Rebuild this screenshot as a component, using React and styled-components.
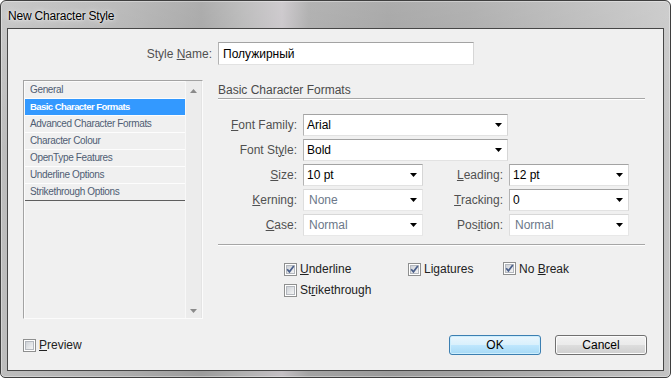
import React from 'react';
import styled, { createGlobalStyle } from 'styled-components';

const Global = createGlobalStyle`
  html, body { margin: 0; padding: 0; background: #fff; }
  body {
    width: 671px; height: 378px; overflow: hidden;
    font-family: "Liberation Sans", Arial, sans-serif;
  }
  * { box-sizing: border-box; }
`;

const Window = styled.div`
  width: 671px;
  height: 378px;
  display: flex;
  flex-direction: column;
  border: 1px solid #3f3f3f;
  border-radius: 6px 6px 5px 5px;
  padding: 0 6px 6px 6px;
  background:
    linear-gradient(180deg, rgba(255,255,255,0.18) 0%, rgba(255,255,255,0) 40%),
    linear-gradient(90deg, #bdbdbd 0%, #adadad 18%, #9c9c9c 30%, #b0b0b0 36%, #c4c0c4 42%, #a3a3a3 46%,
      #9a9a9a 58%, #a2a2a2 70%, #b4b4b4 86%, #c3c3c3 100%);
  box-shadow: inset 0 0 0 1px rgba(255,255,255,0.35);
`;

const TitleBar = styled.div`
  height: 27px;
  display: flex;
  align-items: center;
  padding: 2px 0 0 1px;
  font-size: 12px;
  letter-spacing: -0.2px;
  color: #000;
  text-shadow: 0 0 6px rgba(255,255,255,0.95), 0 0 2px rgba(255,255,255,0.8);
`;

const Content = styled.div`
  flex: 1;
  display: flex;
  flex-direction: column;
  border: 1px solid #464646;
  background: #f0f0f0;
`;

const StyleNameRow = styled.div`
  display: flex;
  align-items: center;
  gap: 6px;
  margin-top: 13px;
`;

const NameLabel = styled.label`
  width: 204px;
  text-align: right;
  font-size: 12px;
  color: #505050;
`;

const TextInput = styled.div`
  width: 256px;
  height: 23px;
  display: flex;
  align-items: center;
  padding-left: 4px;
  background: #fff;
  border: 1px solid;
  border-color: #a3a3a3 #d6d6d6 #e2e2e2 #b3b3b3;
  font-size: 12px;
  color: #000;
`;

const Body = styled.div`
  display: flex;
  margin-top: 15px;
  padding-left: 15px;
`;

const ListBox = styled.div`
  width: 180px;
  height: 239px;
  display: flex;
  border: 1px solid;
  border-color: #a3a3a3 #fbfbfb #fbfbfb #a3a3a3;
  background: #f0f0f0;
  box-shadow: inset 1px 1px 0 #fbfbfb;
  padding-left: 1px;
`;

const Rows = styled.div`
  flex: 1;
  display: flex;
  flex-direction: column;
  padding-top: 1px;
`;

const Row = styled.div`
  height: 17px;
  line-height: 16px;
  padding-left: 5px;
  font-size: ${p => (p.$selected ? '9.5px' : '10px')};
  letter-spacing: ${p => (p.$selected ? '-0.55px' : '-0.35px')};
  white-space: nowrap;
  border-bottom: 1px solid ${p => (p.$last ? '#5e5e5e' : '#fdfdfd')};
  background: ${p => (p.$selected ? '#3399ff' : 'transparent')};
  color: ${p => (p.$selected ? '#ffffff' : '#4f5d73')};
  font-weight: ${p => (p.$selected ? 'bold' : 'normal')};
`;

const ScrollTrack = styled.div`
  width: 17px;
  display: flex;
  flex-direction: column;
  justify-content: space-between;
  align-items: center;
  padding: 8px 0 5px 0;
  background: #ececec;
  border-left: 1px solid #f8f8f8;
  border-right: 1px solid #e4e4e4;
`;

const RightPanel = styled.div`
  width: 427px;
  margin-left: 15px;
  display: flex;
  flex-direction: column;
`;

const Heading = styled.div`
  padding-top: 3px;
  line-height: 15px;
  font-size: 12px;
  color: #4a4a4a;
  border-bottom: 1px solid #a6a6a6;
  box-shadow: 0 1px 0 #fff;
`;

const FormGrid = styled.div`
  display: grid;
  grid-template-columns: 79px 120px 74px 120px;
  grid-auto-rows: 22px;
  column-gap: 6px;
  row-gap: 3px;
  margin-top: 15px;
`;

const FieldLabel = styled.label`
  align-self: center;
  text-align: right;
  font-size: 12px;
  color: #505050;
  white-space: nowrap;
  u { text-decoration-thickness: 1px; text-underline-offset: 1px; }
`;

const Select = styled.div`
  ${p => (p.$wide ? 'grid-column: 2 / span 3; width: 205px;' : '')}
  height: 22px;
  display: flex;
  align-items: center;
  justify-content: space-between;
  padding: 0 5px 0 ${p => (p.$disabled ? '5px' : '3px')};
  background: #fff;
  border: 1px solid;
  border-color: ${p => (p.$disabled ? '#d8d8d8 #e6e6e6 #e8e8e8 #dedede' : '#a3a3a3 #d6d6d6 #e2e2e2 #b3b3b3')};
  font-size: 12px;
  color: ${p => (p.$disabled ? '#6c7889' : '#000')};
`;

const Separator = styled.div`
  margin-top: 8px;
  border-top: 1px solid #a6a6a6;
  border-bottom: 1px solid #fff;
`;

const Checks = styled.div`
  display: grid;
  grid-template-columns: 124px 95px auto;
  grid-auto-rows: 14px;
  row-gap: 7px;
  margin-top: 16px;
  padding-left: 66px;
`;

const CheckItem = styled.label`
  display: flex;
  align-items: center;
  gap: 3px;
  font-size: 12px;
  line-height: 14px;
  color: #222;
  white-space: nowrap;
  margin-top: ${p => (p.$raise ? '-1px' : '0')};
`;

const Footer = styled.div`
  margin-top: auto;
  display: flex;
  align-items: center;
  padding: 0 16px 15px 15px;
`;

const Spacer = styled.div`
  flex: 1;
`;

const Button = styled.button`
  width: 92px;
  height: 20px;
  margin-left: ${p => (p.$gap ? '14px' : '0')};
  padding: 0;
  border-radius: 3px;
  font-family: "Liberation Sans", Arial, sans-serif;
  font-size: 12px;
  color: #000;
  border: 1px solid ${p => (p.$default ? '#3c7fb1' : '#707070')};
  background: ${p =>
    p.$default
      ? 'linear-gradient(180deg, #eaf6fd 0%, #d9f0fc 48%, #bee6fd 52%, #a7d9f5 100%)'
      : 'linear-gradient(180deg, #f2f2f2 0%, #ebebeb 48%, #dddddd 52%, #cfcfcf 100%)'};
  box-shadow: inset 0 0 0 1px ${p => (p.$default ? '#cdeefd' : '#fcfcfc')};
`;

const Arrow = () => (
  <svg width="7" height="4" viewBox="0 0 7 4">
    <polygon points="0,0 7,0 3.5,4" fill="#000" />
  </svg>
);

const ScrollArrow = ({ down }) => (
  <svg width="7" height="4" viewBox="0 0 7 4">
    <polygon points={down ? '0,0 7,0 3.5,4' : '0,4 7,4 3.5,0'} fill="#8a8a8a" />
  </svg>
);

const Box = ({ checked }) => (
  <svg width="13" height="13" viewBox="0 0 13 13">
    <defs>
      <linearGradient id={checked ? 'cbg1' : 'cbg0'} x1="0" y1="0" x2="1" y2="1">
        <stop offset="0" stopColor="#cbcfd5" />
        <stop offset="1" stopColor="#f7f7f7" />
      </linearGradient>
    </defs>
    <rect x="0.5" y="0.5" width="12" height="12" fill="#fff" stroke="#8e8f8f" />
    <rect x="2.5" y="2.5" width="8" height="8" fill={`url(#${checked ? 'cbg1' : 'cbg0'})`} stroke="#b4b8be" />
    {checked && (
      <path d="M3.2 6.3 L5.4 8.8 L9.8 3" fill="none" stroke="#4a5f8a" strokeWidth="1.7" />
    )}
  </svg>
);

const listItems = [
  'General',
  'Basic Character Formats',
  'Advanced Character Formats',
  'Character Colour',
  'OpenType Features',
  'Underline Options',
  'Strikethrough Options',
];

export default function App() {
  return (
    <>
      <Global />
      <Window>
        <TitleBar>New Character Style</TitleBar>
        <Content>
          <StyleNameRow>
            <NameLabel>Style <u>N</u>ame:</NameLabel>
            <TextInput>Полужирный</TextInput>
          </StyleNameRow>
          <Body>
            <ListBox>
              <Rows>
                {listItems.map((t, i) => (
                  <Row key={t} $selected={i === 1} $last={i === listItems.length - 1}>
                    {t}
                  </Row>
                ))}
              </Rows>
              <ScrollTrack>
                <ScrollArrow />
                <ScrollArrow down />
              </ScrollTrack>
            </ListBox>
            <RightPanel>
              <Heading>Basic Character Formats</Heading>
              <FormGrid>
                <FieldLabel><u>F</u>ont Family:</FieldLabel>
                <Select $wide><span>Arial</span><Arrow /></Select>
                <FieldLabel>Font St<u>y</u>le:</FieldLabel>
                <Select $wide><span>Bold</span><Arrow /></Select>
                <FieldLabel><u>S</u>ize:</FieldLabel>
                <Select><span>10 pt</span><Arrow /></Select>
                <FieldLabel><u>L</u>eading:</FieldLabel>
                <Select><span>12 pt</span><Arrow /></Select>
                <FieldLabel><u>K</u>erning:</FieldLabel>
                <Select $disabled><span>None</span><Arrow /></Select>
                <FieldLabel><u>T</u>racking:</FieldLabel>
                <Select><span>0</span><Arrow /></Select>
                <FieldLabel><u>C</u>ase:</FieldLabel>
                <Select $disabled><span>Normal</span><Arrow /></Select>
                <FieldLabel>Pos<u>i</u>tion:</FieldLabel>
                <Select $disabled><span>Normal</span><Arrow /></Select>
              </FormGrid>
              <Separator />
              <Checks>
                <CheckItem><Box checked /><span><u>U</u>nderline</span></CheckItem>
                <CheckItem><Box checked /><span>Li<u>g</u>atures</span></CheckItem>
                <CheckItem $raise><Box checked /><span>No <u>B</u>reak</span></CheckItem>
                <CheckItem><Box /><span>St<u>r</u>ikethrough</span></CheckItem>
              </Checks>
            </RightPanel>
          </Body>
          <Footer>
            <CheckItem><Box /><span><u>P</u>review</span></CheckItem>
            <Spacer />
            <Button $default>OK</Button>
            <Button $gap>Cancel</Button>
          </Footer>
        </Content>
      </Window>
    </>
  );
}
